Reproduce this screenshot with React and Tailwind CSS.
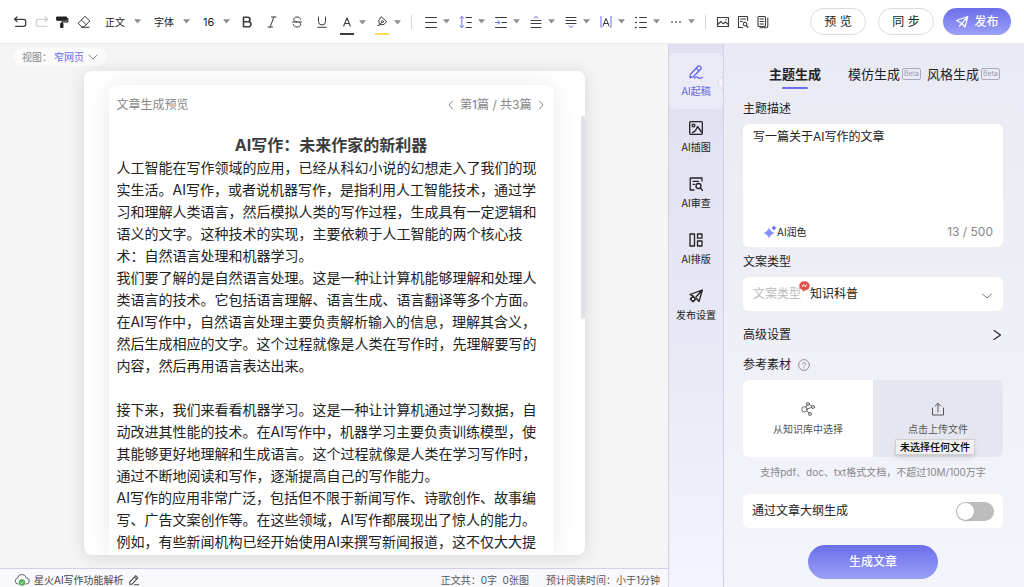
import React, { useState } from 'react';

const Svg = ({ size = 'size-[14px]', box = 14, sw = 1, children }) => (
  <svg
    viewBox={`0 0 ${box} ${box}`}
    className={`${size} shrink-0`}
    fill="none"
    stroke="currentColor"
    strokeWidth={sw}
    strokeLinecap="round"
    strokeLinejoin="round"
    aria-hidden="true"
  >
    {children}
  </svg>
);

const Caret = () => (
  <svg viewBox="0 0 7 5" className="w-[7px] h-[5px] shrink-0" aria-hidden="true">
    <path d="M0 0.3h7L3.5 4.6z" fill="#8f8f8f" />
  </svg>
);

const UndoIcon = () => (
  <Svg sw={1.3}><path d="M4 2 1.5 4.3 4 6.5M1.5 4.3h9.2c1.2 0 2 .8 2 2v3c0 1.2-.8 2-2 2H2.5" /></Svg>
);
const RedoIcon = () => (
  <Svg sw={1.1}><path d="M10 2l2.5 2.3L10 6.5M12.5 4.3H3.3c-1.2 0-2 .8-2 2v3c0 1.200.8 2 2 2H12" /></Svg>
);
const PainterIcon = () => (
  <Svg>
    <path d="M2 2h9.500v3.300H2z" fill="currentColor" />
    <path d="M11.500 3.500h1.300v3.300H7v1.500" strokeWidth="1.200" />
    <path d="M6 8.300h2v4.200H6z" fill="currentColor" />
  </Svg>
);
const EraserIcon = () => (
  <Svg><path d="M8.300 1.500 12.800 6 7 11.800H4.600L1.500 8.500zM4.500 5.200 9.200 9.700M4.600 12.300h7.500" /></Svg>
);
const BoldIcon = () => (
  <Svg sw={1.6}><path d="M3.500 2.200h4.200a2.300 2.300 0 0 1 0 4.600H3.500zM3.500 6.800h4.900a2.500 2.500 0 0 1 0 5H3.500z" /></Svg>
);
const ItalicIcon = () => (
  <Svg><path d="M6.500 2h4.500M3 12h4.500M8.800 2 5.200 12" /></Svg>
);
const StrikeIcon = () => (
  <Svg><path d="M10.500 4.300C10 2.800 8.800 2 7 2 5 2 3.700 3 3.700 4.500c0 1.300 1 2 3.300 2.500M3.300 9.500C3.700 11.200 5 12 7 12c2.200 0 3.600-1 3.600-2.600 0-1-.5-1.700-1.400-2.100M2.500 7h9" /></Svg>
);
const UnderlineIcon = () => (
  <Svg><path d="M3.500 2v4.500a3.500 3.500 0 0 0 7 0V2M2.800 12.300h8.400" /></Svg>
);
const ColorIcon = () => (
  <span className="flex flex-col items-center">
    <Svg sw={1.1}><path d="M3.700 11 7 3l3.300 8M4.900 8.500h4.200" /></Svg>
    <span className="w-[14px] h-[2px] mt-1 bg-[#3c3c3c]" />
  </span>
);
const MarkerIcon = () => (
  <span className="flex flex-col items-center">
    <Svg>
      <path d="M6.500 2 11.500 6.500 9 9.500 4.500 9.800 3.800 5.800zM4.500 9.800 6.800 7.300M3.800 10.500 2.800 10.500" />
      <circle cx="7.500" cy="6.600" r="1" />
    </Svg>
    <span className="w-[14px] h-[2px] mt-1 bg-[#f8da62]" />
  </span>
);
const AlignIcon = () => <Svg><path d="M1.500 2.500h11M1.500 7.500h11M1.500 12.500h11" /></Svg>;
const LineHeightIcon = () => (
  <Svg>
    <path d="M2.800 1.500v11M1 3.200l1.800-1.700L4.600 3.200M1 10.800l1.800 1.700 1.800-1.700" stroke="#6a6df0" />
    <path d="M7 2.500h5.500M8 7.500h4.500M7 12.500h5.500" />
  </Svg>
);
const IndentIcon = () => (
  <Svg>
    <path d="M1.500 2.500h11M8 7.500h4.500M1.500 12.500h11" />
    <path d="M1.500 7.500h4M4 5.800 5.700 7.500 4 9.200" stroke="#6a6df0" />
  </Svg>
);
const SpaceBeforeIcon = () => (
  <Svg><path d="M5 3.200 7 1.500l2 1.700" stroke="#6a6df0" /><path d="M2 5.500h10M2 8.500h10M2 12.500h10" /></Svg>
);
const SpaceAfterIcon = () => (
  <Svg><path d="M5 10.800 7 12.500l2-1.700" stroke="#6a6df0" /><path d="M2 2.500h10M2 5.500h10M2 8.500h10" /></Svg>
);
const SpacingIcon = () => (
  <Svg><path d="M2 1.500v11M12 1.500v11" stroke="#6a6df0" /><path d="M4 11 7 3.500l3 7.500M5 8.500h4" /></Svg>
);
const ListIcon = () => (
  <Svg><path d="M5.500 2.500h7M5.500 7.500h7M5.500 12.500h7" /><path d="M1.800 2.500h.4M1.800 7.500h.4M1.800 12.500h.4" strokeWidth="1.600" /></Svg>
);
const MoreIcon = () => <Svg sw={1.7}><path d="M3 7h.1M7 7h.1M11 7h.1" /></Svg>;
const PictureIcon = () => (
  <Svg sw={1.1}><path d="M1.500 2.500h11v9h-11zM1.800 9.500l3-3 2.500 2.300 2.200-1.800 2.800 2.500M10 4.700h.4" /></Svg>
);
const DocSearchIcon = () => (
  <Svg sw={1.1}><path d="M11.500 5.500v-4h-9v11h4M4.500 4h5M4.500 6.500h2M9 7.300a1.800 1.800 0 1 0 .1 0M10.400 10.800 12 12.500" /></Svg>
);
const CopyDocIcon = () => (
  <Svg sw={1.1}>
    <rect x="2" y="1.500" width="7.500" height="10" rx="1" />
    <path d="M11.800 3v8c0 1.200-.6 1.800-1.800 1.800H4M4 4h3.500M4 6.500h3.500M4 9h3.500" />
  </Svg>
);

const dropdownTools = [
  { label: '对齐', icon: <AlignIcon /> },
  { label: '行高', icon: <LineHeightIcon /> },
  { label: '缩进', icon: <IndentIcon /> },
  { label: '段前距', icon: <SpaceBeforeIcon /> },
  { label: '段后距', icon: <SpaceAfterIcon /> },
  { label: '字间距', icon: <SpacingIcon /> },
  { label: '列表', icon: <ListIcon /> },
  { label: '更多', icon: <MoreIcon /> },
];

const sideItems = [
  {
    label: 'AI起稿',
    icon: (
      <Svg size="size-4" box={16} sw={1.3}>
        <path d="M2.500 10.200 9.700 2.500a1.700 1.700 0 0 1 2.500 0l.4.400a1.700 1.700 0 0 1 0 2.400L5.300 12.800l-3.300.7zM8.300 4.200l2.700 2.700M6.500 14c1.500-1.500 2.500-1.500 3.500-.5s2.500 1 4.500 0" />
      </Svg>
    ),
  },
  {
    label: 'AI插图',
    icon: (
      <Svg size="size-4" box={16} sw={1.3}>
        <rect x="1.700" y="1.700" width="12.600" height="12.600" rx="1" />
        <circle cx="5.500" cy="5.500" r="1.400" />
        <path d="M4.500 12.500Q7.500 12 9.500 6.500l4 5.500" />
      </Svg>
    ),
  },
  {
    label: 'AI审查',
    icon: (
      <Svg size="size-4" box={16} sw={1.3}>
        <path d="M14 5V2H2.200v12H6M5 5.300h5.500M5 8.300h1.500" />
        <circle cx="10.500" cy="10" r="2.500" />
        <path d="m12.400 12 2 2.300" />
      </Svg>
    ),
  },
  {
    label: 'AI排版',
    icon: (
      <Svg size="size-4" box={16} sw={1.3}>
        <path d="M2 2h4.500v12H2zM9.500 2H14v4.200H9.500zM9.500 9H14v5H9.500z" />
      </Svg>
    ),
  },
  {
    label: '发布设置',
    icon: (
      <Svg size="size-4" box={16} sw={1.3}>
        <path d="M2 6.500 14.300 2 11 13.500 8.500 10.500M2 6.500l3 1.300M14.300 2 8 9" />
        <circle cx="5" cy="11" r="2" />
        <path d="M5 8.200V9M5 13v.9M2.300 11H3M7 11h.8" />
      </Svg>
    ),
  },
];

const paragraphs = [
  '人工智能在写作领域的应用，已经从科幻小说的幻想走入了我们的现实生活。AI写作，或者说机器写作，是指利用人工智能技术，通过学习和理解人类语言，然后模拟人类的写作过程，生成具有一定逻辑和语义的文字。这种技术的实现，主要依赖于人工智能的两个核心技术：自然语言处理和机器学习。',
  '我们要了解的是自然语言处理。这是一种让计算机能够理解和处理人类语言的技术。它包括语言理解、语言生成、语言翻译等多个方面。在AI写作中，自然语言处理主要负责解析输入的信息，理解其含义，然后生成相应的文字。这个过程就像是人类在写作时，先理解要写的内容，然后再用语言表达出来。',
  '',
  '接下来，我们来看看机器学习。这是一种让计算机通过学习数据，自动改进其性能的技术。在AI写作中，机器学习主要负责训练模型，使其能够更好地理解和生成语言。这个过程就像是人类在学习写作时，通过不断地阅读和写作，逐渐提高自己的写作能力。',
  'AI写作的应用非常广泛，包括但不限于新闻写作、诗歌创作、故事编写、广告文案创作等。在这些领域，AI写作都展现出了惊人的能力。例如，有些新闻机构已经开始使用AI来撰写新闻报道，这不仅大大提',
];

const Header = () => (
  <header className="h-11 shrink-0 flex items-center justify-between px-[13px] bg-white border-b border-[#e8e8ef] text-[#3c3c3c]">
    <div className="flex items-center" role="toolbar" aria-label="编辑工具">
      <button aria-label="撤销"><UndoIcon /></button>
      <button aria-label="重做" className="ml-2 text-[#c9c9c9]"><RedoIcon /></button>
      <button aria-label="格式刷" className="ml-[6px] text-[#222]"><PainterIcon /></button>
      <button aria-label="清除格式" className="ml-2"><EraserIcon /></button>
      <button className="ml-[14px] flex items-center gap-[9px] text-[#222]">正文<Caret /></button>
      <button className="ml-[13px] flex items-center gap-[9px] text-[#222]">字体<Caret /></button>
      <button className="ml-[13px] flex items-center gap-[9px] text-[11px] text-[#222]">16<Caret /></button>
      <div className="ml-[10px] flex items-center gap-[11px]">
        <button aria-label="加粗"><BoldIcon /></button>
        <button aria-label="斜体"><ItalicIcon /></button>
        <button aria-label="删除线"><StrikeIcon /></button>
        <button aria-label="下划线"><UnderlineIcon /></button>
      </div>
      <div className="ml-[11px] flex items-center gap-[9px]">
        <button aria-label="文字颜色" className="h-5 mt-[6px] flex items-start gap-[5px]">
          <ColorIcon /><span className="pt-[5px] flex"><Caret /></span>
        </button>
        <button aria-label="背景颜色" className="h-5 mt-[6px] flex items-start gap-[5px]">
          <MarkerIcon /><span className="pt-[5px] flex"><Caret /></span>
        </button>
      </div>
      <span className="ml-[10px] w-px h-[14px] bg-[#d5d5e0]" />
      <div className="ml-3 flex items-center gap-[9px]">
        {dropdownTools.map((tool) => (
          <button key={tool.label} aria-label={tool.label} className="flex items-center gap-[5px]">
            {tool.icon}<Caret />
          </button>
        ))}
      </div>
      <span className="ml-[10px] w-px h-[14px] bg-[#d5d5e0]" />
      <div className="ml-[10px] flex items-center gap-[6px]">
        <button aria-label="图片"><PictureIcon /></button>
        <button aria-label="查找"><DocSearchIcon /></button>
        <button aria-label="模板"><CopyDocIcon /></button>
      </div>
    </div>
    <div className="flex items-center text-xs text-[#222]">
      <button className="w-14 h-[27px] rounded-full border border-[#dcdcdc] bg-white">预 览</button>
      <button className="ml-3 w-14 h-[27px] rounded-full border border-[#dcdcdc] bg-white">同 步</button>
      <button className="ml-[9px] w-[68px] h-[27px] rounded-full bg-linear-to-b from-[#6b6ee9] to-[#9c9ff9] text-white font-medium flex items-center justify-center gap-[5px]">
        <Svg sw={1.2}><path d="M1.500 5.500 12.800 1.500 10 12 6.800 8.500zM6.800 8.500 12.800 1.500M6.800 8.500 4.500 11" /></Svg>
        发布
      </button>
    </div>
  </header>
);

const Editor = () => (
  <section className="flex-1 min-w-0 flex flex-col bg-[#f5f5f5]">
    <div className="flex-1 min-h-0 flex flex-col pt-1 pb-[13px]">
      <button className="ml-[13px] self-start h-[18px] px-[9px] rounded-full bg-[#fbfbfb] flex items-center text-[#888]">
        视图：<span className="ml-[2px] text-[#6a6de8]">窄网页</span>
        <Svg size="size-[10px] ml-1" box={10}><path d="M1 3l4 4 4-4" /></Svg>
      </button>
      <div className="relative mx-auto mt-[5px] w-3/4 flex-1 min-h-0 pt-[14px] pl-[25px] pr-[31px] rounded-lg bg-white shadow-[0_2px_18px_rgba(0,0,0,0.12)] overflow-hidden">
        <article className="h-full px-2 pt-3 rounded-t-lg bg-white shadow-[0_0_22px_rgba(0,0,0,0.09)] overflow-hidden">
          <div className="flex items-center justify-between h-4 text-xs text-[#888]">
            <h2>文章生成预览</h2>
            <div className="flex items-center gap-1">
              <button aria-label="上一篇"><Svg size="size-[10px]" box={10}><path d="M6.500 1 3 5l3.500 4" /></Svg></button>
              <span>第<span className="text-[#6a6de8]">1</span>篇 / 共3篇</span>
              <button aria-label="下一篇"><Svg size="size-[10px]" box={10}><path d="M3.500 1 7 5 3.500 9" /></Svg></button>
            </div>
          </div>
          <h1 className="mt-5 text-base leading-6 font-bold text-center text-[#3c3c3c]">AI写作：未来作家的新利器</h1>
          <div className="text-sm leading-[22px] text-[#222]">
            {paragraphs.map((text, i) => (
              <p key={i} className="min-h-[22px]">{text}</p>
            ))}
          </div>
        </article>
        <span className="absolute right-0 top-[45px] w-1 h-[203px] rounded-full bg-[#e0e0ee]" />
      </div>
    </div>
    <footer className="h-[19px] shrink-0 flex items-center justify-between pl-[14px] pr-2 pt-1 bg-[#f9f9fd] border-t border-[#d2d0ea] text-[#444]">
      <div className="flex items-center gap-1">
        <svg viewBox="0 0 16 14" className="w-4 h-[14px]" fill="none" aria-hidden="true">
          <path d="M4.500 11H4a3 3 0 0 1-.5-5.900A4.500 4.500 0 0 1 12.300 5a3 3 0 0 1 0 6H11.500" stroke="#666" />
          <circle cx="8" cy="9.500" r="3.200" fill="#4db250" />
          <path d="m6.500 9.500 1.100 1.100 2-2" stroke="#fff" />
        </svg>
        <span>星火AI写作功能解析</span>
        <button aria-label="修改标题">
          <Svg size="size-3"><path d="M2 9.500 9 2l2.500 2.500-7 7.500H2zM7.500 3.700 10 6.200M7.500 12.500h5" strokeWidth="1.200" /></Svg>
        </button>
      </div>
      <div className="flex items-center gap-[17px] text-[#555]">
        <span>正文共：0字&nbsp; 0张图</span>
        <span>预计阅读时间：小于1分钟</span>
      </div>
    </footer>
  </section>
);

const SideNav = () => (
  <nav className="relative w-14 shrink-0 pt-[9px] bg-linear-to-b from-[#e1e0f1] via-[#e7e7f5] to-[#f3f4fd] border-x border-[#d2d0ea]">
    {sideItems.map((item, i) => (
      <button
        key={item.label}
        className={`w-full h-14 flex flex-col items-center justify-center gap-1 leading-[14px] ${
          i === 0 ? 'rounded-md bg-[#ebebf8] text-[#6164e6]' : 'text-[#222]'
        }`}
      >
        {item.icon}
        <span>{item.label}</span>
      </button>
    ))}
    <svg viewBox="0 0 6 14" className="absolute right-0 top-8 w-[6px] h-[14px]" aria-hidden="true">
      <path d="M6 0v14L1.500 9Q0 7 1.500 5z" fill="#f5f5fb" stroke="#d0d0de" strokeWidth="0.800" />
    </svg>
  </nav>
);

const Beta = () => (
  <span className="ml-[2px] w-[19px] h-3 rounded-[2px] border border-[#aaa9c4] text-[7px] leading-[10px] text-center text-[#9b9bb0]">Beta</span>
);

const Panel = () => {
  const [prompt, setPrompt] = useState('写一篇关于AI写作的文章');
  const [outline, setOutline] = useState(false);

  return (
    <aside className="w-[300px] shrink-0 pl-[19px] pr-[21px] pt-[22px] bg-linear-to-b from-[#eaeaf4] to-[#f4f4fb] text-xs leading-4 text-[#222]">
      <div role="tablist" className="flex items-start justify-between pl-[26px] pr-[3px] h-[23px] text-[13px]">
        <button role="tab" aria-selected="true" className="flex flex-col items-center font-bold">
          主题生成
          <span className="mt-[5px] w-[26px] h-[2px] rounded-full bg-[#6a6de8]" />
        </button>
        <div className="flex gap-[6px]">
          <button role="tab" aria-selected="false" className="flex items-center">模仿生成<Beta /></button>
          <button role="tab" aria-selected="false" className="flex items-center">风格生成<Beta /></button>
        </div>
      </div>

      <label htmlFor="prompt" className="block mt-3">主题描述</label>
      <div className="mt-[7px] h-[123px] rounded-md bg-white flex flex-col px-[10px] pt-[5px] pb-[7px]">
        <textarea
          id="prompt"
          value={prompt}
          onChange={(e) => setPrompt(e.target.value)}
          className="flex-1 min-h-0 resize-none outline-none"
        />
        <div className="flex items-center justify-between pl-[10px]">
          <button className="flex items-center text-[10px]">
            <svg viewBox="0 0 14 14" className="size-[14px]" aria-hidden="true">
              <path d="M6 2.500Q7.200 6.800 12 8 7.200 9.200 6 13.500 4.800 9.200 0.300 8 4.800 6.800 6 2.500z" fill="#8b8ef5" />
              <path d="M11 0.300Q11.600 2.400 13.700 3 11.600 3.600 11 5.700 10.400 3.600 8.300 3 10.400 2.400 11 0.300z" fill="#6a6df0" />
            </svg>
            AI润色
          </button>
          <span className="text-[#888]">13 / 500</span>
        </div>
      </div>

      <label htmlFor="type" className="block mt-[7px]">文案类型</label>
      <div className="relative mt-[7px] h-[34px] rounded-md bg-white flex items-center px-[10px]">
        <span className="text-[#bbb]">文案类型</span>
        <svg viewBox="0 0 11 11" className="absolute left-14 top-1 size-[11px]" aria-hidden="true">
          <path d="M5.500 0.200c3 0 5.200 1.900 5.200 4.500S8.500 9.200 6 9.200L3.800 10.900 3.700 8.900C1.600 8.300.3 6.800.3 4.700.3 2.100 2.500.2 5.500.2z" fill="#e0524b" />
          <path d="M3.200 6 4.500 3.300l1.800 2.700L7.700 3.300" stroke="#fff" strokeWidth="0.900" fill="none" />
        </svg>
        <select id="type" className="ml-[9px] flex-1 appearance-none bg-transparent outline-none">
          <option>知识科普</option>
        </select>
        <Svg size="size-3 mt-1" box={12}><path d="M1.500 4 6 8 10.500 4" stroke="#777" /></Svg>
      </div>

      <button className="mt-4 w-full flex items-center justify-between">
        高级设置
        <Svg size="size-3" box={12} sw={1.1}><path d="M3 1.500 9.500 6 3 10.500" /></Svg>
      </button>

      <div className="mt-[14px] flex items-center gap-[7px]">
        参考素材
        <button aria-label="帮助" className="text-[#888]">
          <Svg size="size-3" box={12} sw={0.9}>
            <circle cx="6" cy="6" r="5.400" />
            <path d="M4.500 4.800a1.500 1.500 0 1 1 2.300 1.300C6.200 6.500 6 6.700 6 7.300M6 8.900v.1" />
          </Svg>
        </button>
      </div>
      <div className="relative mt-[7px] h-[77px] rounded-md flex text-[10px] leading-[14px] text-[#555]">
        <button className="flex-1 rounded-l-md bg-white flex flex-col items-center justify-center gap-[6px]">
          <Svg sw={0.9}>
            <circle cx="3.500" cy="7.300" r="2.700" />
            <circle cx="7" cy="2" r="1.400" />
            <circle cx="12" cy="5" r="1.500" />
            <circle cx="9" cy="12" r="1.500" />
            <path d="M5 5 6.200 3.200M8.400 2.300l2.300 1.700M6.200 7l4.500-1.600M5.700 8.800 8 10.900" />
          </Svg>
          从知识库中选择
        </button>
        <label className="flex-1 rounded-r-md bg-[#e6e6f1] flex flex-col items-center justify-center gap-[6px]">
          <Svg><path d="M1.500 6v7h11V6M7 10V1.300M4.300 4 7 1.300 9.700 4" /></Svg>
          点击上传文件
          <input type="file" className="sr-only" />
        </label>
        <span role="tooltip" className="absolute right-7 top-[59px] h-4 px-1 border border-[#d0d0d0] bg-[#f0f0f0] shadow-md font-medium text-black">
          未选择任何文件
        </span>
      </div>
      <p className="mt-[7px] text-center text-[10px] text-[#888]">支持pdf、doc、txt格式文档，不超过10M/100万字</p>

      <label className="mt-[14px] h-[34px] px-[9px] rounded-md bg-white flex items-center justify-between">
        通过文章大纲生成
        <span className="relative w-[38px] h-[19px] flex">
          <input
            type="checkbox"
            role="switch"
            checked={outline}
            onChange={(e) => setOutline(e.target.checked)}
            className="peer appearance-none w-full h-full rounded-full bg-[#bdbdbd] checked:bg-[#6b6ee9]"
          />
          <span className="absolute left-px top-px size-[17px] rounded-full bg-white shadow peer-checked:left-5" />
        </span>
      </label>

      <button className="block mx-auto mt-[17px] w-1/2 h-[34px] rounded-full bg-linear-to-b from-[#6b6ee9] to-[#9c9ff9] font-medium text-white">
        生成文章
      </button>
    </aside>
  );
};

const App = () => (
  <div className="h-screen flex flex-col overflow-hidden text-[10px] leading-4 font-['Inter','Noto_Sans_CJK_SC',sans-serif]">
    <Header />
    <main className="flex-1 min-h-0 flex">
      <Editor />
      <SideNav />
      <Panel />
    </main>
  </div>
);

export default App;
